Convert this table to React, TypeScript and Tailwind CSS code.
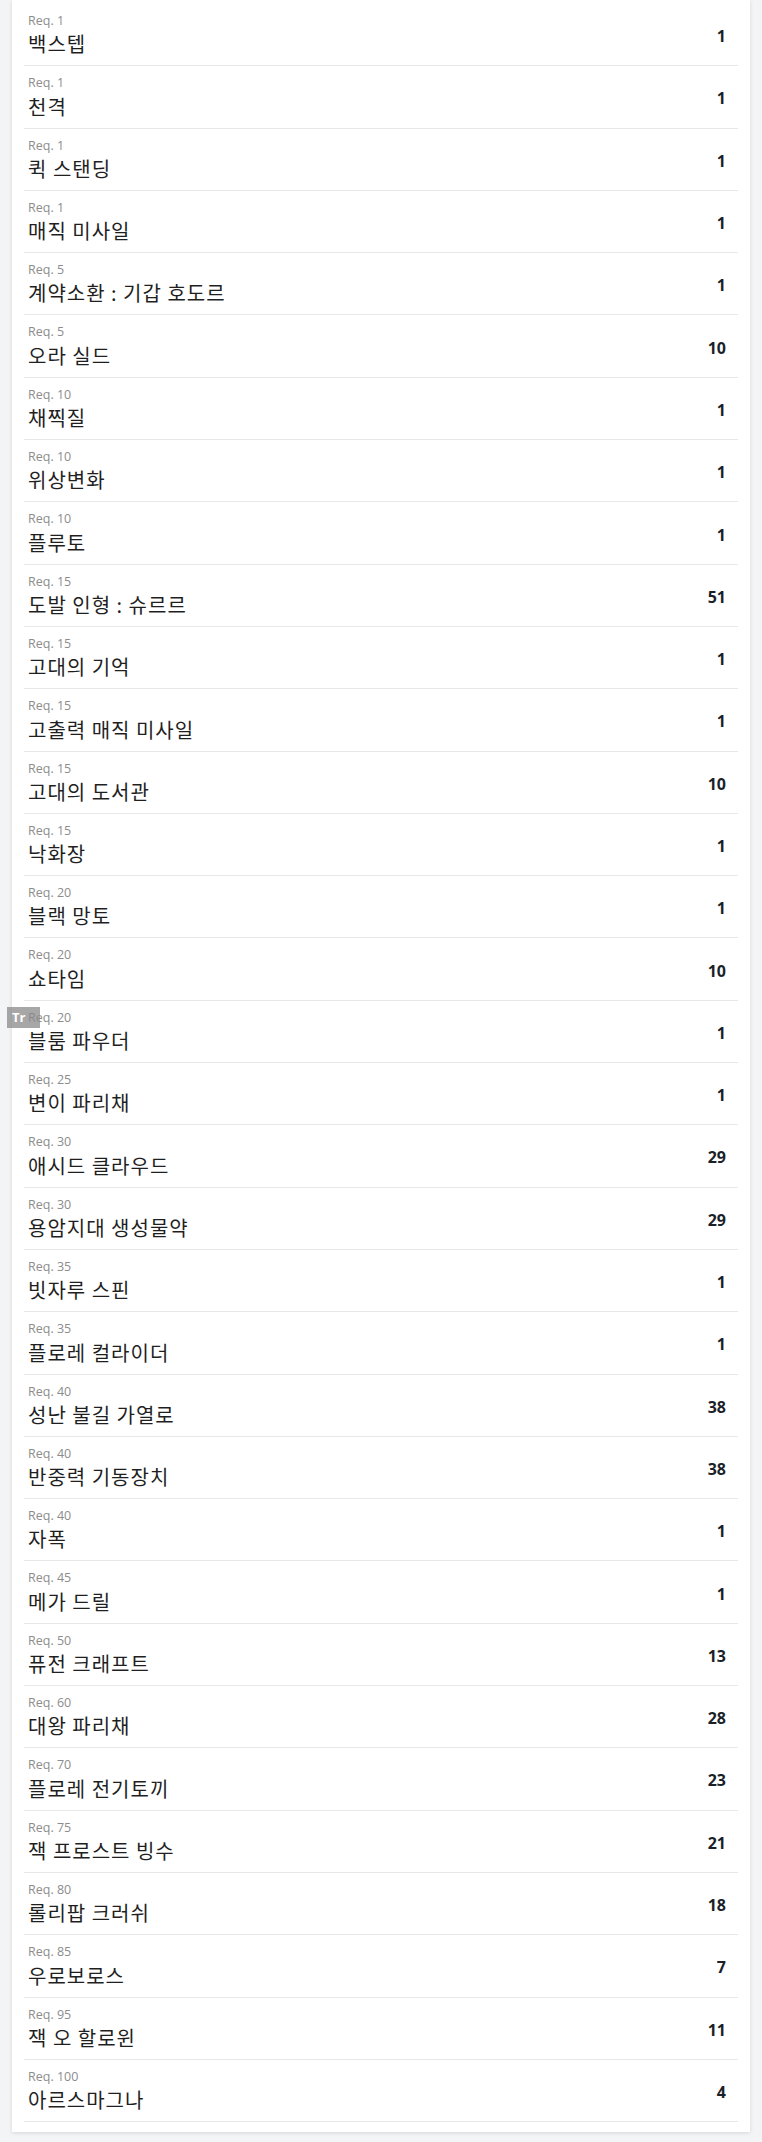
import React from 'react';

// 스킬 목록: [요구 레벨, 이름, 수량]
const skills: [number, string, number][] = [
  [1, '백스텝', 1],
  [1, '천격', 1],
  [1, '퀵 스탠딩', 1],
  [1, '매직 미사일', 1],
  [5, '계약소환 : 기갑 호도르', 1],
  [5, '오라 실드', 10],
  [10, '채찍질', 1],
  [10, '위상변화', 1],
  [10, '플루토', 1],
  [15, '도발 인형 : 슈르르', 51],
  [15, '고대의 기억', 1],
  [15, '고출력 매직 미사일', 1],
  [15, '고대의 도서관', 10],
  [15, '낙화장', 1],
  [20, '블랙 망토', 1],
  [20, '쇼타임', 10],
  [20, '블룸 파우더', 1],
  [25, '변이 파리채', 1],
  [30, '애시드 클라우드', 29],
  [30, '용암지대 생성물약', 29],
  [35, '빗자루 스핀', 1],
  [35, '플로레 컬라이더', 1],
  [40, '성난 불길 가열로', 38],
  [40, '반중력 기동장치', 38],
  [40, '자폭', 1],
  [45, '메가 드릴', 1],
  [50, '퓨전 크래프트', 13],
  [60, '대왕 파리채', 28],
  [70, '플로레 전기토끼', 23],
  [75, '잭 프로스트 빙수', 21],
  [80, '롤리팝 크러쉬', 18],
  [85, '우로보로스', 7],
  [95, '잭 오 할로윈', 11],
  [100, '아르스마그나', 4],
];

export default function App() {
  return (
    <div
      className="min-h-[2142px] bg-[#f3f4f6] px-3 pb-[9px]"
      style={{ fontFamily: '"Open Sans", "Noto Sans CJK KR", sans-serif' }}
    >
      <div className="relative bg-white px-3 pt-1 pb-[10px] shadow-[0_1px_4px_rgba(0,0,0,0.12)]">
        {skills.map(([req, name, count], i) => (
          <div
            key={i}
            className="relative flex items-center justify-between border-b border-[#e8e8e8] py-2 pl-[4px] pr-[12px]"
          >
            {/* 확장 프로그램 오버레이 배지 */}
            {i === 16 && (
              <span className="absolute left-[-17px] top-[6px] flex h-[21px] w-[33px] items-center bg-[#8a8a8a]/75 pl-[5px] text-[13px] font-bold leading-none text-white">
                Tr
              </span>
            )}
            <div className="flex flex-col">
              <span className="text-[12.5px] leading-[18.3px] text-[#8c8c8c]">
                Req. {req}
              </span>
              <span
                className="text-[20px] leading-[27px] tracking-[1px] text-[#1f1f1f]"
                style={{ fontFamily: '"Noto Sans CJK KR", "Noto Sans", sans-serif' }}
              >
                {name}
              </span>
            </div>
            <span className="pt-[3px] text-[16px] font-bold text-[#1b1f2a]">{count}</span>
          </div>
        ))}
      </div>
    </div>
  );
}
